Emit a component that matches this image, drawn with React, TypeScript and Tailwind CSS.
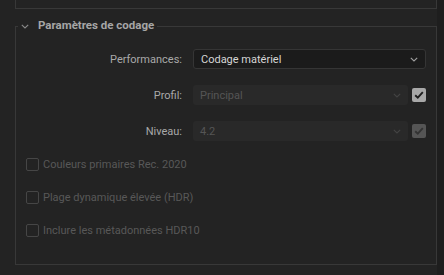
import React from "react";

function Chevron({ className }: { className?: string }) {
  return (
    <svg width="8" height="5" viewBox="0 0 8 5" className={className} fill="none">
      <path d="M0.8 0.8 L4 4 L7.2 0.8" stroke="currentColor" strokeWidth="1.1" />
    </svg>
  );
}

function Check({ className }: { className?: string }) {
  return (
    <svg width="10" height="8" viewBox="0 0 10 8" className={className} fill="none">
      <path d="M1.2 4.2 L3.8 6.6 L8.8 1.2" stroke="currentColor" strokeWidth="1.9" />
    </svg>
  );
}

function Row({ label, children }: { label: string; children: React.ReactNode }) {
  return (
    <div className="flex h-[20px] items-center">
      <div className="w-[167px] pr-[1px] text-right text-[#a9a9a9]">{label}</div>
      <div className="ml-[10px] flex h-full flex-1 items-center pr-[10px]">{children}</div>
    </div>
  );
}

function Option({ label }: { label: string }) {
  return (
    <div className="flex items-center gap-[4px]">
      <div className="h-[13px] w-[13px] rounded-[2px] border border-[#464646]" />
      <span className="text-[11px] text-[#585858]">{label}</span>
    </div>
  );
}

export default function App() {
  return (
    <div
      className="flex h-[275px] w-[444px] bg-[#1e1e1e] text-[11px] leading-none"
      style={{ fontFamily: "Roboto, 'Noto Sans', sans-serif" }}
    >
      <div className="w-[437px] bg-[#232323] pl-[15px]">
        <div className="h-[9px] border-x border-b border-[#383838]" />

        <fieldset className="mt-[9px] h-[247px] border border-[#383838]">
          <legend className="ml-[2px] flex h-[16px] items-center gap-[9px] px-[3px]">
            <Chevron className="text-[#8a8a8a]" />
            <span className="text-[11.5px] font-bold text-[#a6a6a6]">Paramètres de codage</span>
          </legend>

          <div className="mt-[15px] flex flex-col gap-[16px]">
            <Row label="Performances:">
              <div className="flex h-full flex-1 items-center justify-between rounded-[3px] border border-[#353535] bg-[#1b1b1b] pl-[7px] pr-[7px] text-[#d6d6d6]">
                <span>Codage matériel</span>
                <Chevron className="text-[#a0a0a0]" />
              </div>
            </Row>
            <Row label="Profil:">
              <div className="flex h-full flex-1 items-center justify-between rounded-[3px] bg-[#292929] pl-[7px] pr-[7px] text-[#555555]">
                <span>Principal</span>
                <Chevron className="text-[#444444]" />
              </div>
              <div className="ml-[4px] flex h-[14px] w-[14px] items-center justify-center rounded-[2px] bg-[#a8a8a8] text-[#1e1e1e]">
                <Check />
              </div>
            </Row>
            <Row label="Niveau:">
              <div className="flex h-full flex-1 items-center justify-between rounded-[3px] bg-[#292929] pl-[7px] pr-[7px] text-[#555555]">
                <span>4.2</span>
                <Chevron className="text-[#444444]" />
              </div>
              <div className="ml-[4px] flex h-[14px] w-[14px] items-center justify-center rounded-[2px] bg-[#555555] text-[#333333]">
                <Check />
              </div>
            </Row>
          </div>

          <div className="mt-[17px] flex flex-col gap-[20px] pl-[10px]">
            <Option label="Couleurs primaires Rec. 2020" />
            <Option label="Plage dynamique élevée (HDR)" />
            <Option label="Inclure les métadonnées HDR10" />
          </div>
        </fieldset>
      </div>
    </div>
  );
}
